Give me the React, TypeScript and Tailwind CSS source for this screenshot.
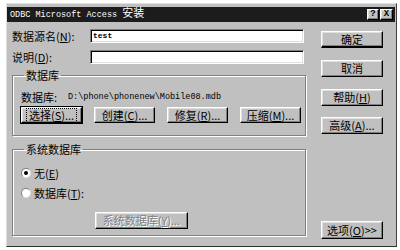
import React from 'react';

const cjk = "font-['Noto_Sans_CJK_SC',sans-serif]";
const mono = "font-['Liberation_Mono',monospace]";
const raised =
  'border border-t-white border-l-white border-b-black border-r-black shadow-[inset_-1px_-1px_0_#808080,inset_1px_1px_0_#dfdfdf]';
const sunken =
  'border border-t-[#808080] border-l-[#808080] border-b-white border-r-white shadow-[inset_1px_1px_0_#000,inset_-1px_-1px_0_#dfdfdf]';

const Key: React.FC<{ k: string }> = ({ k }) => (
  <>
    (<span className="underline underline-offset-1">{k}</span>)
  </>
);

interface BtnProps {
  children: React.ReactNode;
  className?: string;
  focused?: boolean;
  disabled?: boolean;
}

const Btn: React.FC<BtnProps> = ({ children, className = '', focused, disabled }) => (
  <div
    className={`${focused ? 'outline outline-1 outline-black' : ''} ${raised} bg-[#c0c0c0] flex items-center justify-center text-[11px] leading-none ${
      disabled ? 'text-[#808080] [text-shadow:1px_1px_0_#fff]' : 'text-black'
    } ${className}`}
  >
    <span className={`${focused ? 'outline outline-1 outline-dotted outline-black outline-offset-1' : ''} px-[1px]`}>
      {children}
    </span>
  </div>
);

const Radio: React.FC<{ checked?: boolean; children: React.ReactNode; className?: string }> = ({
  checked,
  children,
  className = '',
}) => (
  <div className={`flex items-center gap-[3px] h-[12px] ${className}`}>
    <div className="w-[10px] h-[10px] rounded-full bg-white border border-t-[#808080] border-l-[#808080] border-b-[#dfdfdf] border-r-[#dfdfdf] flex items-center justify-center">
      {checked && <div className="w-[4px] h-[4px] rounded-full bg-black" />}
    </div>
    <span className="text-[11px] leading-none">{children}</span>
  </div>
);

export default function App() {
  return (
    <div className={`w-[400px] h-[250px] bg-white pt-[3px] pl-[6px] ${cjk}`}>
      <div className="w-[391px] h-[244px] bg-[#c0c0c0] border border-t-[#dfdfdf] border-l-[#dfdfdf] border-b-[#303030] border-r-[#404040] pt-[3px] pr-[1px] flex flex-col">
        {/* Title bar */}
        <div className="h-[15px] bg-[#1c1c1c] flex items-center pl-[3px] pr-[2px]">
          <span className="text-white flex items-baseline">
            <span className={`${mono} text-[8.5px]`}>ODBC Microsoft Access&nbsp;</span>
            <span className="text-[11px] leading-none">安装</span>
          </span>
          <div className="ml-auto flex gap-[1px]">
            <div className={`${raised} bg-[#c0c0c0] w-[12px] h-[11px] flex items-center justify-center text-[9px] font-bold leading-none ${mono}`}>
              ?
            </div>
            <div className={`${raised} bg-[#c0c0c0] w-[13px] h-[11px] flex items-center justify-center text-[9px] font-bold leading-none ${mono}`}>
              X
            </div>
          </div>
        </div>

        {/* Body */}
        <div className="flex pl-[5px]">
          {/* Left column */}
          <div className="w-[294px] flex flex-col">
            <div className="flex items-center h-[14px] mt-[7px]">
              <span className="w-[78px] text-[11px] leading-none">
                数据源名<Key k="N" />:
              </span>
              <div className={`${sunken} bg-white w-[214px] h-[14px] flex items-center pl-[2px]`}>
                <span className={`${mono} text-[8px] font-bold leading-none`}>test</span>
              </div>
            </div>
            <div className="flex items-center h-[14px] mt-[7px]">
              <span className="w-[78px] text-[11px] leading-none">
                说明<Key k="D" />:
              </span>
              <div className={`${sunken} bg-white w-[214px] h-[14px]`} />
            </div>

            <fieldset className="mt-[5px] border border-[#808080] shadow-[inset_1px_1px_0_#fff,1px_1px_0_#fff] pl-[8px] pb-[12px]">
              <legend className="ml-[3px] px-[2px] text-[11px] leading-[12px]">数据库</legend>
              <div className="flex items-center h-[12px] mt-[10px]">
                <span className="text-[11px] leading-none w-[47px]">数据库:</span>
                <span className={`${mono} text-[8.5px] leading-none`}>D:\phone\phonenew\Mobile08.mdb</span>
              </div>
              <div className="flex gap-[12px] mt-[4px]">
                <Btn focused className="w-[61px] h-[16px]">
                  选择<Key k="S" />...
                </Btn>
                <Btn className="w-[61px] h-[16px]">
                  创建<Key k="C" />...
                </Btn>
                <Btn className="w-[61px] h-[16px]">
                  修复<Key k="R" />...
                </Btn>
                <Btn className="w-[61px] h-[16px]">
                  压缩<Key k="M" />...
                </Btn>
              </div>
            </fieldset>

            <fieldset className="mt-[7px] border border-[#808080] shadow-[inset_1px_1px_0_#fff,1px_1px_0_#fff] pl-[8px] pb-[6px]">
              <legend className="ml-[3px] px-[2px] text-[11px] leading-[12px]">系统数据库</legend>
              <Radio checked className="mt-[12px]">
                无<Key k="E" />
              </Radio>
              <Radio className="mt-[8px]">
                数据库<Key k="T" />:
              </Radio>
              <Btn disabled className="ml-[74px] mt-[13px] w-[93px] h-[17px]">
                系统数据库<Key k="Y" />...
              </Btn>
            </fieldset>
          </div>

          {/* Right column */}
          <div className="ml-[15px] w-[62px] flex flex-col">
            <Btn className="mt-[9px] h-[17px] border-b-2">确定</Btn>
            <Btn className="mt-[12px] h-[17px]">取消</Btn>
            <Btn className="mt-[12px] h-[17px]">
              帮助<Key k="H" />
            </Btn>
            <Btn className="mt-[11px] h-[17px]">
              高级<Key k="A" />...
            </Btn>
            <Btn className="mt-[87px] h-[18px]">
              选项<Key k="O" />&gt;&gt;
            </Btn>
          </div>
        </div>
      </div>
    </div>
  );
}
